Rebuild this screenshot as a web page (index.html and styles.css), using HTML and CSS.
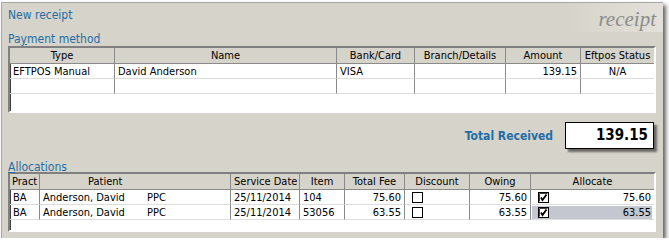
FILE: index.html
```html
<!DOCTYPE html>
<html lang="en">

<head>
    <meta charset="UTF-8" />
    <title>New receipt</title>
    <link rel="stylesheet" href="styles.css">
</head>

<body>

    <div class="panel">
        <div class="header">
            <span class="title">New receipt</span>
            <span class="brand">receipt</span>
        </div>

        <div class="label">Pa<u>y</u>ment method</div>
        <div class="grid pay-grid">
            <table>
                <colgroup>
                    <col style="width:105px">
                    <col style="width:222px">
                    <col style="width:78px">
                    <col style="width:91px">
                    <col style="width:75px">
                    <col style="width:73px">
                </colgroup>
                <tr>
                    <th>Type</th>
                    <th>Name</th>
                    <th>Bank/Card</th>
                    <th>Branch/Details</th>
                    <th>Amount</th>
                    <th>Eftpos Status</th>
                </tr>
                <tr>
                    <td>EFTPOS Manual</td>
                    <td>David Anderson</td>
                    <td>VISA</td>
                    <td></td>
                    <td class="num">139.15</td>
                    <td class="center">N/A</td>
                </tr>
                <tr>
                    <td></td>
                    <td></td>
                    <td></td>
                    <td></td>
                    <td></td>
                    <td></td>
                </tr>
            </table>
        </div>

        <div class="total-row">
            <span class="total-label">Total Received</span>
            <div class="total-box">139.15</div>
        </div>

        <div class="label alloc-label"><u>A</u>llocations</div>
        <div class="grid alloc-grid">
            <table>
                <colgroup>
                    <col style="width:30px">
                    <col style="width:105px">
                    <col style="width:86px">
                    <col style="width:69px">
                    <col style="width:45px">
                    <col style="width:60px">
                    <col style="width:65px">
                    <col style="width:61px">
                    <col style="width:123px">
                </colgroup>
                <tr>
                    <th class="left">Pract</th>
                    <th colspan="2" class="patient-head">Patient</th>
                    <th>Service Date</th>
                    <th>Item</th>
                    <th>Total Fee</th>
                    <th>Discount</th>
                    <th>Owing</th>
                    <th>Allocate</th>
                </tr>
                <tr>
                    <td>BA</td>
                    <td class="no-line">Anderson, David</td>
                    <td class="ppc">PPC</td>
                    <td>25/11/2014</td>
                    <td>104</td>
                    <td class="num">75.60</td>
                    <td><span class="box"></span></td>
                    <td class="num">75.60</td>
                    <td>
                        <div class="alloc">
                            <svg class="check" width="11" height="11" viewBox="0 0 11 11">
                                <rect x="0.5" y="0.5" width="10" height="10" fill="#fff" stroke="#000"/>
                                <path d="M1.5 1.5H9.5M1.5 1.5V9.5" stroke="#404040" fill="none"/>
                                <path d="M3 5.5L4.5 8L8.5 2.5" stroke="#000" stroke-width="1.8" fill="none"/>
                            </svg>
                            <span>75.60</span>
                        </div>
                    </td>
                </tr>
                <tr>
                    <td>BA</td>
                    <td class="no-line">Anderson, David</td>
                    <td class="ppc">PPC</td>
                    <td>25/11/2014</td>
                    <td>53056</td>
                    <td class="num">63.55</td>
                    <td><span class="box"></span></td>
                    <td class="num">63.55</td>
                    <td>
                        <div class="alloc selected">
                            <svg class="check" width="11" height="11" viewBox="0 0 11 11">
                                <rect x="0.5" y="0.5" width="10" height="10" fill="#fff" stroke="#000"/>
                                <path d="M1.5 1.5H9.5M1.5 1.5V9.5" stroke="#404040" fill="none"/>
                                <path d="M3 5.5L4.5 8L8.5 2.5" stroke="#000" stroke-width="1.8" fill="none"/>
                            </svg>
                            <span>63.55</span>
                        </div>
                    </td>
                </tr>
            </table>
        </div>
    </div>

</body>

</html>
```

FILE: styles.css
```css
body {
    margin: 0;
    background: #fff;
    font-family: "DejaVu Sans Condensed", "DejaVu Sans", sans-serif;
    font-size: 11px;
    color: #000;
}

.panel {
    margin: 2px 0 0 1px;
    width: 651px;
    height: 235px;
    padding: 0 4px 0 6px;
    background: #d6d3ca;
    border-top: 1px solid #a8a8a8;
    border-left: 1px solid #a8a8a8;
    box-shadow: 3px 3px 4px rgba(0, 0, 0, 0.6);
}

.header {
    display: flex;
    justify-content: space-between;
    align-items: center;
    height: 29px;
    margin: 0 -4px 0 -6px;
    padding: 0 4px 0 6px;
    background: linear-gradient(to right, #d6d3ca 85%, #e2e0d8 100%);
}

.title {
    color: #1e6ea6;
    font-size: 12px;
    margin-top: -5px;
}

.brand {
    font-family: "Liberation Serif", serif;
    font-style: italic;
    font-size: 21px;
    color: #8c8c8c;
    margin-right: 3px;
    margin-top: 3px;
}

.label {
    color: #1e6ea6;
    height: 14px;
    line-height: 14px;
    font-size: 12px;
}

.alloc-label {
    line-height: 18px;
}

.label u {
    text-decoration-thickness: 1px;
}

.grid {
    width: 644px;
    background: #fff;
    border: 2px solid;
    border-color: #808080 #fff #fff #808080;
    box-shadow: inset 1px 1px 0 #404040;
}

.pay-grid {
    height: 63px;
}

.alloc-grid {
    height: 56px;
}

table {
    border-collapse: separate;
    border-spacing: 0;
    table-layout: fixed;
    width: 644px;
}

th,
td {
    box-sizing: border-box;
    padding: 0 3px;
    white-space: nowrap;
    overflow: hidden;
    font-weight: normal;
    border-right: 1px solid #8a8a8a;
}

th {
    background: #d6d3ca;
    height: 16px;
    border-bottom: 1px solid #8a8a8a;
    text-align: center;
}

td {
    height: 15px;
    border-bottom: 1px solid #dcdcdc;
}

th:last-child,
td:last-child {
    border-right: none;
}

.num {
    text-align: right;
}

.center {
    text-align: center;
}

th.left {
    text-align: left;
    padding-left: 2px;
}

.patient-head {
    text-align: left;
    padding-left: 48px;
}

.no-line {
    border-right: none;
}

.ppc {
    padding-left: 2px;
}

.total-row {
    display: flex;
    justify-content: flex-end;
    align-items: center;
    gap: 12px;
    height: 45px;
    padding-right: 5px;
}

.total-label {
    color: #1e6ea6;
    font-weight: bold;
    font-size: 12px;
}

.total-box {
    box-sizing: border-box;
    width: 89px;
    height: 27px;
    line-height: 25px;
    padding-right: 5px;
    text-align: right;
    font-weight: bold;
    font-size: 15px;
    background: #fff;
    border: 1px solid #000;
    box-shadow: 3px 3px 2px rgba(0, 0, 0, 0.5);
}

.box {
    display: block;
    width: 9px;
    height: 9px;
    margin-left: 4px;
    border: 1px solid #000;
    background: #fff;
}

.alloc {
    display: flex;
    align-items: center;
    justify-content: space-between;
    height: 13px;
    margin: 0 -1px 0 -2px;
    padding: 0 1px 0 6px;
}

.alloc.selected {
    background: #c4c7cf;
}

.check {
    display: block;
}
```
